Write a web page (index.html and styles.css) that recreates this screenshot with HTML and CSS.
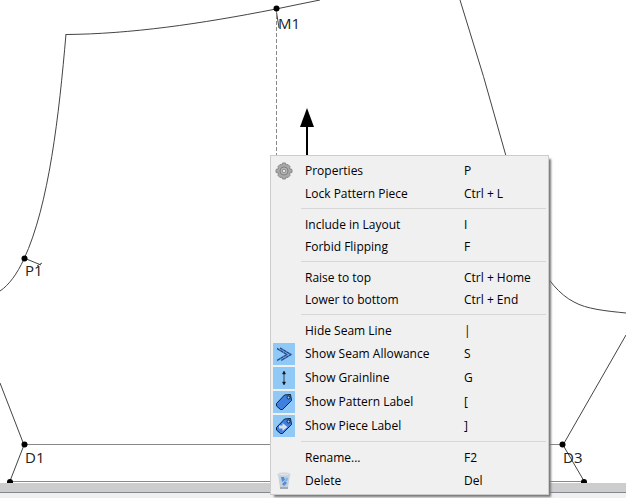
FILE: index.html
```html
<!DOCTYPE html>
<html lang="en">
<head>
    <meta charset="UTF-8">
    <meta name="viewport" content="width=device-width, initial-scale=1.0">
    <title>Pattern Piece</title>
    <link rel="stylesheet" href="styles.css">
</head>
<body>

    <div class="workspace">
        <!-- Drawing -->
        <div class="canvas">
            <svg class="drawing" width="1252" height="483">
                <g class="seam">
                    <path d="M66 34.500C130 34 200 24 276 9Q300 4 320 0"/>
                    <path d="M66 34C59 115 49 205 24 259C17 274 9 285 0 291"/>
                    <path d="M460 0Q484 75 506 156Q526 228 538 260C546 279 560 295 574 302C586 309 606 311 626 313"/>
                    <path d="M0 383L24 445L10 481M626 335L563 445L584 481"/>
                    <path d="M24 258L41 265M37 266L42 263M276 9L279 28"/>
                </g>
                <path class="guide" d="M24 444.500H563M10 481.500H584"/>
                <path class="fold" d="M276.500 9V160"/>
                <path class="grain" d="M307 125V160"/>
                <path d="M307 108L314 127H300Z"/>
                <g class="points">
                    <circle cx="276.500" cy="8.500" r="3"/>
                    <circle cx="24.500" cy="258.500" r="3"/>
                    <circle cx="24.500" cy="444.500" r="3"/>
                    <circle cx="562.500" cy="444.500" r="3"/>
                    <circle cx="10" cy="482" r="3"/>
                    <circle cx="584" cy="482" r="3"/>
                </g>
                <g class="names">
                    <text x="278" y="29">M1</text>
                    <text x="25" y="276">P1</text>
                    <text x="25" y="463">D1</text>
                    <text x="563" y="463">D3</text>
                </g>
            </svg>
        </div>
        <div class="scroll-track"></div>
        <div class="status-bar"></div>

        <!-- Context menu -->
        <div class="menu" role="menu">
            <button class="item with-icon" role="menuitem">
                <svg class="icon" viewBox="0 0 22 22">
                    <path d="M9.500 3H12.500L13 5L15 4.500L17 6.500L16.500 8.500L19 9.500V12.500L16.500 13L17 15.500L15 17.500L13 17L12.500 19H9.500L9 17L7 17.500L5 15.500L5.500 13L3 12.500V9.500L5.500 8.500L5 6.500L7 4.500L9 5Z" fill="#a8a8a8" stroke="#8a8a8a"/>
                    <circle cx="11" cy="11" r="4" fill="#b8b8b8" stroke="#808080"/>
                    <circle cx="11" cy="11" r="1.800" fill="#e4e4e4" stroke="#8a8a8a"/>
                </svg>
                <span class="label">Properties</span><span class="key">P</span>
            </button>
            <button class="item" role="menuitem"><span class="label">Lock Pattern Piece</span><span class="key">Ctrl + L</span></button>
            <hr class="separator">
            <button class="item" role="menuitem"><span class="label">Include in Layout</span><span class="key">I</span></button>
            <button class="item" role="menuitem"><span class="label">Forbid Flipping</span><span class="key">F</span></button>
            <hr class="separator">
            <button class="item" role="menuitem"><span class="label">Raise to top</span><span class="key">Ctrl + Home</span></button>
            <button class="item" role="menuitem"><span class="label">Lower to bottom</span><span class="key">Ctrl + End</span></button>
            <hr class="separator">
            <button class="item" role="menuitem"><span class="label">Hide Seam Line</span><span class="key">|</span></button>
            <button class="item with-icon" role="menuitemcheckbox" aria-checked="true">
                <svg class="icon" viewBox="0 0 22 22">
                    <path d="M4 5.500L14 11.500L4 17.500M7 5L18 11.500L8 17.500" fill="none" stroke="#4a80d0" stroke-width="1.600"/>
                    <path d="M4 5.500L14 11.500L4 17.500M7 5L18 11.500L8 17.500" fill="none" stroke="#1c2c50" stroke-width=".8" stroke-dasharray="3 1"/>
                </svg>
                <span class="label">Show Seam Allowance</span><span class="key">S</span>
            </button>
            <button class="item with-icon" role="menuitemcheckbox" aria-checked="true">
                <svg class="icon" viewBox="0 0 22 22">
                    <path d="M11 5V17" stroke="#345" stroke-width="1"/>
                    <path d="M11 4L12.500 7H9.500ZM11 18L12.500 15H9.500Z" fill="#111" stroke="#111" stroke-width=".5"/>
                </svg>
                <span class="label">Show Grainline</span><span class="key">G</span>
            </button>
            <button class="item with-icon" role="menuitemcheckbox" aria-checked="true">
                <svg class="icon" viewBox="0 0 22 22">
                    <path d="M3.500 12.500L11.500 4L17.500 3.500L18.500 9.500L9.500 18.500H7.500L3.500 15Z" fill="#3f7fe0" stroke="#10203c" stroke-width="1"/>
                    <circle cx="15.500" cy="6.500" r="1.500" fill="#90c8f6" stroke="#10203c"/>
                </svg>
                <span class="label">Show Pattern Label</span><span class="key">[</span>
            </button>
            <button class="item with-icon" role="menuitemcheckbox" aria-checked="true">
                <svg class="icon" viewBox="0 0 22 22">
                    <path d="M3.500 12.500L11.500 4L17.500 3.500L18.500 9.500L9.500 18.500H7.500L3.500 15Z" fill="#3f7fe0" stroke="#10203c" stroke-width="1"/>
                    <circle cx="15.500" cy="6.500" r="1.500" fill="#90c8f6" stroke="#10203c"/>
                    <path d="M6 10.500H9.500V8L14.500 12L9.500 16V13.500H6Z" fill="#d5deea"/>
                </svg>
                <span class="label">Show Piece Label</span><span class="key">]</span>
            </button>
            <hr class="separator">
            <button class="item" role="menuitem"><span class="label">Rename...</span><span class="key">F2</span></button>
            <button class="item with-icon" role="menuitem">
                <svg class="icon" viewBox="0 0 22 22">
                    <path d="M5 4L7 18H15L17 4Z" fill="#c5d0dc"/>
                    <path d="M7 18H15" stroke="#a3a9ae" stroke-width="2"/>
                    <ellipse cx="11" cy="4.500" rx="6" ry="1.500" fill="#dde4ea" stroke="#cbd1d6"/>
                    <path d="M8 7L11 7L12 10L9 12ZM12 11L14 13L11 16L9 14Z" fill="#4e8edb"/>
                    <path d="M14 8L13 11" stroke="#7faee3" stroke-width="2"/>
                </svg>
                <span class="label">Delete</span><span class="key">Del</span>
            </button>
        </div>
    </div>

</body>
</html>
```
FILE: styles.css
```css
body {
    margin: 0;
    font-family: "Open Sans", "Noto Sans", sans-serif;
    background-color: #f0f0f0;
}

.workspace {
    position: relative;
    display: flex;
    flex-direction: column;
    height: 100vh;
    overflow: hidden;
}

/* Drawing */
.canvas {
    flex: 1;
    min-height: 0;
    overflow: hidden;
    background-color: white;
}

.drawing {
    display: block;
}

.seam {
    fill: none;
    stroke: #444;
    stroke-width: 1;
}

.guide {
    stroke: #888;
}

.fold {
    stroke: #888;
    stroke-dasharray: 4 2;
}

.grain {
    stroke: black;
    stroke-width: 2;
}

.names {
    font-size: 15px;
    fill: #222;
}

.scroll-track {
    height: 9px;
    background-color: #cdcdcd;
}

.status-bar {
    height: 5px;
    border-top: 1px solid #828790;
}

/* Context menu */
.menu {
    position: absolute;
    left: 270px;
    top: 155px;
    box-sizing: border-box;
    width: 279px;
    padding: 3px 2px 1px;
    background-color: #f0f0f0;
    border: 1px solid #ccc;
    box-shadow: 3px 3px 2px -1px #777;
}

.item {
    display: grid;
    grid-template-columns: 32px 159px 1fr;
    align-items: center;
    width: 100%;
    height: 22px;
    padding: 0;
    border: none;
    background: none;
    color: black;
    font-family: inherit;
    font-size: 12px;
    text-align: left;
    white-space: nowrap;
}

.with-icon {
    height: 24px;
}

.icon {
    width: 22px;
    height: 22px;
}

.item[aria-checked="true"] .icon {
    background-color: #90c8f6;
}

.label,
.key {
    padding-bottom: 2px;
}

.label {
    grid-column: 2;
}

.separator {
    height: 1px;
    margin: 3px 0 5px 28px;
    border: none;
    background-color: #d7d7d7;
}
```
